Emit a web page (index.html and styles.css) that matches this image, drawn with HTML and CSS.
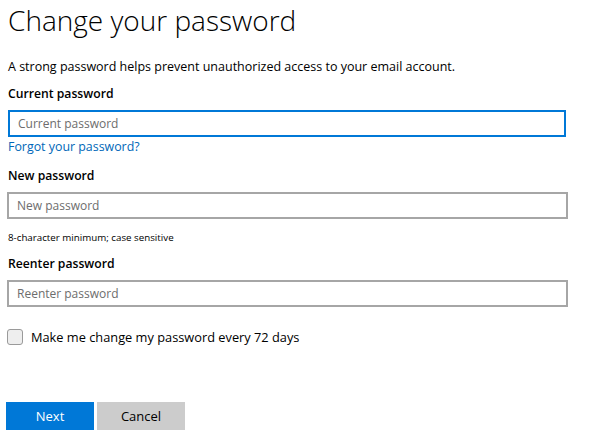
FILE: index.html
```html
<!DOCTYPE html>
<html>
<head>
    <title>Change your password</title>
    <link rel="stylesheet" href="styles.css">
</head>
<body>
    <h1 class="page-title">Change your password</h1>
    <p class="intro">A strong password helps prevent unauthorized access to your email account.</p>
    <form class="pw-form" onsubmit="return false">
        <div class="field">
            <label class="field-label" for="current">Current password</label>
            <input class="text-box focused" type="password" id="current" placeholder="Current password" />
            <a class="forgot" href="#">Forgot your password?</a>
        </div>
        <div class="field">
            <label class="field-label" for="newpw">New password</label>
            <input class="text-box" type="password" id="newpw" placeholder="New password" />
            <div class="hint">8-character minimum; case sensitive</div>
        </div>
        <div class="field">
            <label class="field-label" for="again">Reenter password</label>
            <input class="text-box" type="password" id="again" placeholder="Reenter password" />
        </div>
        <label class="check-row">
            <span class="check-box"></span>
            <span>Make me change my password every 72 days</span>
        </label>
        <div class="actions">
            <button type="submit" class="btn btn-primary">Next</button>
            <button type="button" class="btn btn-secondary">Cancel</button>
        </div>
    </form>
</body>
</html>
```

FILE: styles.css
```css
body {
    margin: 0;
    padding: 0 8px;
    font-family: "Open Sans", "Noto Sans", sans-serif;
    color: #000;
    background-color: #fff;
}

.page-title {
    font-weight: 300;
    font-size: 28px;
    line-height: 40px;
    margin: 0;
}

.intro {
    font-size: 12.5px;
    line-height: 20px;
    margin: 17px 0 0;
}

.field-label {
    display: block;
    font-weight: 600;
    font-size: 12.2px;
    line-height: 20px;
    margin-top: 7px;
}

.field + .field .field-label {
    margin-top: 9px;
}

.text-box {
    display: block;
    width: 561px;
    height: 27px;
    margin: 6px 0 0 -1px;
    padding: 0 8px;
    border: 2px solid #a6a6a6;
    box-sizing: border-box;
    font-family: inherit;
    font-size: 12px;
    outline: none;
}

.text-box::placeholder {
    color: #6d6d6d;
}

.text-box.focused {
    border-color: #0078d7;
    margin-left: 0;
    width: 558px;
}

.forgot {
    display: block;
    color: #0067b8;
    font-size: 12.4px;
    line-height: 20px;
    text-decoration: none;
}

.hint {
    font-size: 9.75px;
    line-height: 14px;
    margin-top: 12px;
}

.check-row {
    display: flex;
    align-items: center;
    gap: 8px;
    margin-top: 21px;
    font-size: 12.8px;
}

.check-box {
    width: 16px;
    height: 16px;
    border: 1px solid #9a9a9a;
    border-radius: 3px;
    background-color: #eeeeee;
    box-sizing: border-box;
    margin-left: -1px;
}

.actions {
    display: flex;
    gap: 3px;
    margin-top: 56px;
    margin-left: -2px;
}

.btn {
    width: 88px;
    height: 28px;
    border: none;
    font-family: inherit;
    font-size: 13px;
    cursor: pointer;
}

.btn-primary {
    background-color: #0078d7;
    color: #fff;
}

.btn-secondary {
    background-color: #cccccc;
    color: #000;
}
```
